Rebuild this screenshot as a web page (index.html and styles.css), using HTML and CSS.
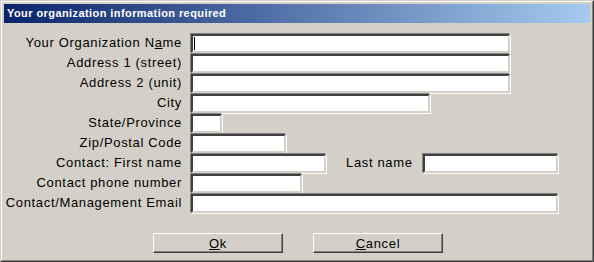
FILE: index.html
```html
<!DOCTYPE html>
<html lang="en">
<head>
    <meta charset="UTF-8">
    <title>Your organization information required</title>
    <link rel="stylesheet" href="styles.css">
</head>
<body>

    <div class="window">
        <div class="window-inner">
            <div class="titlebar">Your organization information required</div>

            <div class="form">
                <label class="label">Your Organization N<u>a</u>me</label>
                <div class="row"><div class="field w-320"><span class="caret"></span></div></div>

                <label class="label">Address 1 (street)</label>
                <div class="row"><div class="field w-320"></div></div>

                <label class="label">Address 2 (unit)</label>
                <div class="row"><div class="field w-320"></div></div>

                <label class="label">City</label>
                <div class="row"><div class="field w-240"></div></div>

                <label class="label">State/Province</label>
                <div class="row"><div class="field w-32"></div></div>

                <label class="label">Zip/Postal Code</label>
                <div class="row"><div class="field w-96"></div></div>

                <label class="label">Contact: First name</label>
                <div class="row">
                    <div class="field w-136"></div>
                    <label class="label inline-label">Last name</label>
                    <div class="field w-136"></div>
                </div>

                <label class="label">Contact phone number</label>
                <div class="row"><div class="field w-112"></div></div>

                <label class="label">Contact/Management Email</label>
                <div class="row"><div class="field w-368"></div></div>
            </div>

            <div class="buttons">
                <button class="btn"><u>O</u>k</button>
                <button class="btn"><u>C</u>ancel</button>
            </div>
        </div>
    </div>

</body>
</html>
```

FILE: styles.css
```css
/* General Reset */
* {
    margin: 0;
    padding: 0;
    box-sizing: border-box;
}

body {
    font-family: 'Liberation Sans', Arial, sans-serif;
    font-size: 13px;
    letter-spacing: 0.66px; /* wider GDI-style spacing */
    color: #000;
    background-color: #d4d0c8;
}

/* Dialog frame (classic raised border) */
.window {
    width: 594px;
    height: 262px;
    background-color: #d4d0c8;
    border-top: 1px solid #d4d0c8;
    border-left: 1px solid #d4d0c8;
    border-right: 1px solid #404040;
    border-bottom: 1px solid #404040;
}

.window-inner {
    height: 100%;
    padding: 2px;
    border-top: 1px solid #fff;
    border-left: 1px solid #fff;
    border-right: 1px solid #808080;
    border-bottom: 1px solid #808080;
}

.titlebar {
    height: 19px;
    line-height: 19px;
    padding-left: 3px;
    color: #fff;
    font-size: 11px;
    font-weight: bold;
    letter-spacing: 0.42px;
    background: linear-gradient(to right, #0a246a, #a6caf0);
}

/* Form grid */
.form {
    display: grid;
    grid-template-columns: 178px auto;
    column-gap: 8px;
    padding-top: 10px;
}

.label {
    height: 20px;
    line-height: 20px;
    text-align: right;
    white-space: nowrap;
}

.row {
    display: flex;
    align-items: center;
    height: 20px;
}

.inline-label {
    margin-left: 20px;
    margin-right: 9px;
}

/* Sunken edit field */
.field {
    position: relative;
    height: 19px;
    margin: 1px 0 0 1px;
    background-color: #fff;
    border-top: 2px solid #404040;
    border-left: 2px solid #404040;
    border-right: 2px solid #d4d0c8;
    border-bottom: 2px solid #d4d0c8;
    box-shadow: -1px -1px 0 #808080, 1px 1px 0 #fff;
}

.caret {
    position: absolute;
    left: 1px;
    top: 1px;
    width: 1px;
    height: 13px;
    background-color: #000;
}

.w-32 { width: 31px; }
.w-96 { width: 95px; }
.w-112 { width: 111px; }
.w-136 { width: 135px; }
.w-240 { width: 239px; }
.w-320 { width: 319px; }
.w-368 { width: 367px; }

/* Buttons */
.buttons {
    display: flex;
    gap: 30px;
    padding-left: 149px;
    margin-top: 20px;
}

.btn {
    width: 130px;
    height: 20px;
    font-family: 'Liberation Sans', Arial, sans-serif;
    font-size: 13px;
    letter-spacing: 0.66px;
    color: #000;
    background-color: #d4d0c8;
    border-top: 1px solid #fff;
    border-left: 1px solid #fff;
    border-right: 1px solid #404040;
    border-bottom: 1px solid #404040;
    box-shadow: inset -1px -1px 0 #808080;
}
```
